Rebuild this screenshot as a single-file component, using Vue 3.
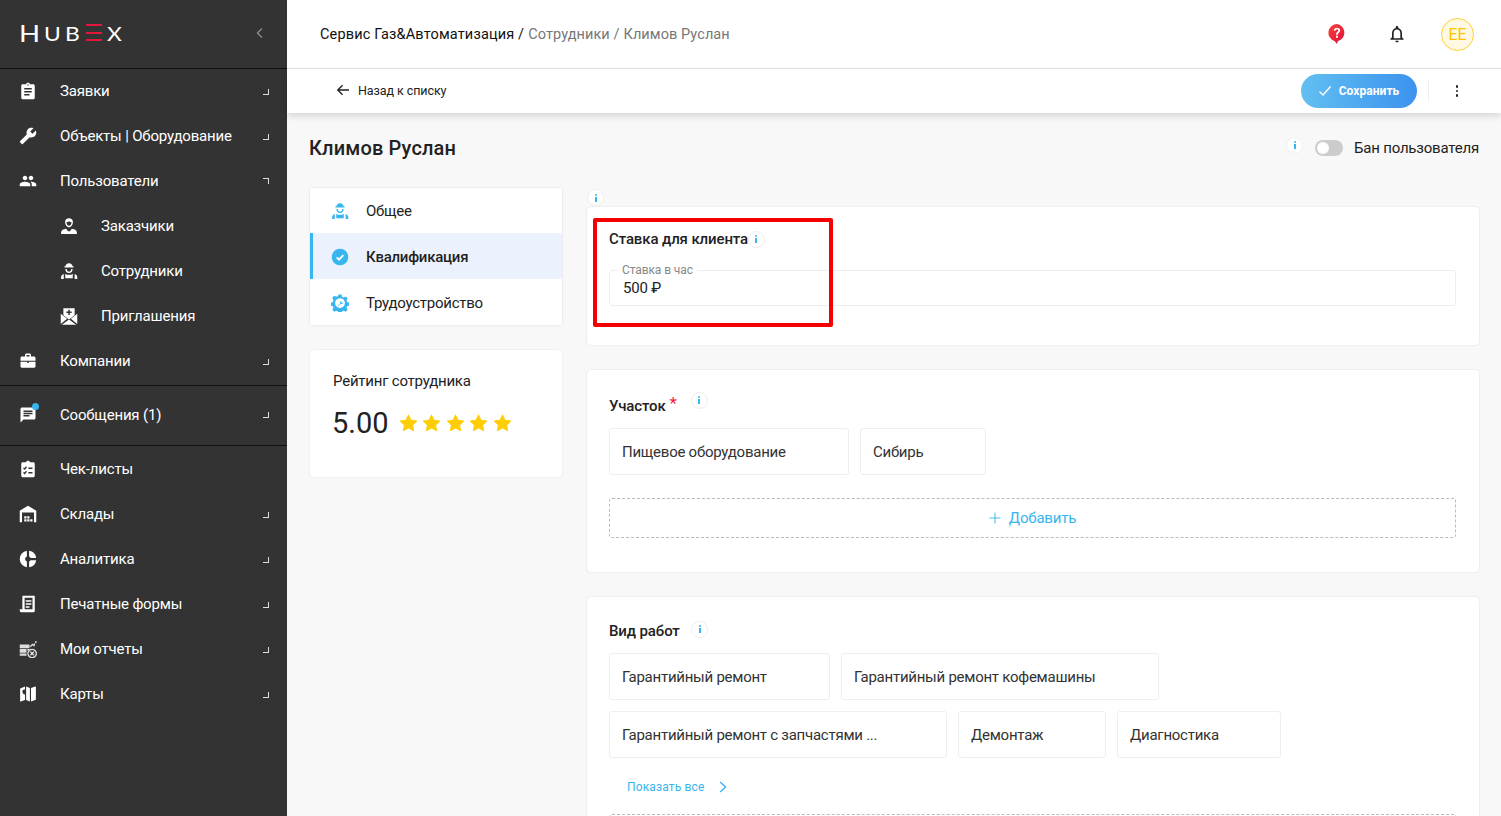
<script setup>
const WHITE = "#fff"
const DARK = "#333"
const BLUE = "#36b5ee"

const workerPaths = (c) => [
  { d: "M12 1.500c-2.700 0-4.600 1.700-4.800 4.300H6v1.500h12V5.800h-1.200c-.2-2.600-2.100-4.300-4.800-4.300z", fill: c },
  { d: "M8 9.300c.2 2.800 1.900 4.500 4 4.500s3.800-1.700 4-4.500", fill: "none", stroke: c },
  { d: "M1.500 22.500V20c0-2 1.500-3.300 3.500-4v6.500zM23 22.500V20c0-2-1.500-3.300-3.500-4v6.500zM7 15.500l2 1.500h6l2-1.500v6H7z", fill: c },
]

const icons = {
  assign: [{ d: "M19 3h-4.180C14.400 1.840 13.300 1 12 1s-2.400.84-2.820 2H5c-1.100 0-2 .9-2 2v16c0 1.100.9 2 2 2h14c1.100 0 2-.9 2-2V5c0-1.100-.9-2-2-2zm-7 0c.55 0 1 .45 1 1s-.45 1-1 1-1-.45-1-1 .45-1 1-1zm2 15H7v-2h7v2zm3-4H7v-2h10v2zm0-4H7V8h10v2z", fill: WHITE }],
  wrench: [{ d: "M1.300 19l9.100-9.100c-.9-2.300-.4-5 1.500-6.900 2-2 5-2.400 7.400-1.300L15 6l3 3 4.400-4.300c1.200 2.400.7 5.400-1.300 7.400-1.900 1.900-4.600 2.400-6.900 1.500l-9.100 9.100c-.4.4-1 .4-1.400 0l-2.300-2.300c-.5-.4-.5-1.100-.1-1.400z", fill: WHITE }],
  people: [{ d: "M16 11c1.660 0 2.990-1.340 2.990-3S17.660 5 16 5s-3 1.340-3 3 1.340 3 3 3zm-8 0c1.660 0 2.990-1.340 2.990-3S9.660 5 8 5 5 6.340 5 8s1.340 3 3 3zm0 2c-2.330 0-7 1.170-7 3.500V19h14v-2.500c0-2.330-4.670-3.500-7-3.500zm8 0c-.29 0-.62.02-.97.05 1.160.84 1.970 1.970 1.970 3.450V19h6v-2.500c0-2.330-4.670-3.500-7-3.500z", fill: WHITE }],
  client: [
    { d: "M12 1.500c-3 0-5.200 1.700-5.200 5 0 3.400 2.200 7 5.200 7s5.200-3.600 5.200-7c0-3.300-2.200-5-5.200-5zm0 10.300c-1.800 0-3.300-2.300-3.500-4.800 1.300-.1 2.700-.6 3.500-1.500.8.900 2.200 1.400 3.500 1.500-.2 2.500-1.700 4.800-3.500 4.800z", fill: WHITE },
    { d: "M1.500 22.500v-2.300c0-2.700 3.300-4.300 6.700-4.700l2.500 3.500h2.600l2.500-3.500c3.400.4 6.700 2 6.700 4.700v2.300z", fill: WHITE },
  ],
  worker: workerPaths(WHITE),
  invite: [
    { d: "M4.500 1.500h15v9.500L12 16.500 4.500 11z", fill: WHITE },
    { d: "M11 3.500h2V6h2.500v2H13v2.500h-2V8H8.500V6H11z", fill: DARK },
    { d: "M1 9v13.500L9.500 15.500zM23 9v13.500L14.500 15.500zM2.500 23.500 12 16.500l9.500 7z", fill: WHITE },
  ],
  work: [
    { d: "M20 6h-4V4c0-1.110-.89-2-2-2h-4c-1.110 0-2 .89-2 2v2H4c-1.110 0-2 .89-2 2v3.500h20V8c0-1.110-.89-2-2-2zm-6 0h-4V4h4v2zM2 13v6c0 1.110.89 2 2 2h16c1.110 0 2-.89 2-2v-6h-9v1.500h-2V13z", fill: WHITE },
  ],
  chat: [{ d: "M20 2H4c-1.100 0-1.990.9-1.990 2L2 22l4-4h14c1.100 0 2-.9 2-2V4c0-1.100-.9-2-2-2zM6 9h12v2H6V9zm8 5H6v-2h8v2zm4-6H6V6h12v2z", fill: WHITE }],
  check: [
    { d: "M19 3h-4.180C14.400 1.840 13.300 1 12 1s-2.400.84-2.820 2H5c-1.100 0-2 .9-2 2v16c0 1.100.9 2 2 2h14c1.100 0 2-.9 2-2V5c0-1.100-.9-2-2-2z", fill: WHITE },
    { d: "M6 10.500l1.500 1.500L10 9M6 16.500 7.500 18l2.500-3M12.500 11H18M12.500 17H18", fill: "none", stroke: DARK },
  ],
  store: [
    { d: "M1 23V7.500L12 1l11 6.500V23h-3V10H4v13z", fill: WHITE },
    { d: "M7 19h3v3H7zM11 19h3v3h-3zM15 19h3v3h-3zM7 15h3v3H7zM11 15h3v3h-3z", fill: WHITE },
  ],
  pie: [
    { d: "M10.500 1.100A11 11 0 0 0 10.500 22.900V15.400A3.600 3.600 0 0 1 10.500 8.600z", fill: WHITE },
    { d: "M13.500 1.100V8.600a3.600 3.600 0 0 1 1.900 1.900h7.500A11 11 0 0 0 13.500 1.100zM15.400 13.500a3.600 3.600 0 0 1-1.900 1.900v7.500a11 11 0 0 0 9.400-9.400z", fill: WHITE },
  ],
  print: [
    { d: "M5 1h16v20c0 1.400-1 2-2 2H3c-1.300 0-2-1-2-2v-2h3.500V1.500zm2.500 2.500V19H18V3.500zM9 7h7.500v2H9zm0 4h7.500v2H9zm0 4h5v2H9z", fill: WHITE, rule: "evenodd" },
  ],
  report: [
    { d: "M1 6h13v5H1zM1 12h9v5H1zM11 12h3v2h-3zM1 18h9v3H1z", fill: "#ddd" },
    { d: "M15 9l3-3 2 1.500 1-3", fill: "none", stroke: "#ddd" },
    { d: "M21.500 1.500h2v2h-2z", fill: WHITE },
    { d: "M17.500 12.500a5.500 5.500 0 1 0 .01 0zM15.200 15.600l4.700 4.700M19.900 15.600l-4.700 4.700", fill: "none", stroke: "#ddd" },
  ],
  map: [
    { d: "M1.500 4.500 8 2v4.200a2.500 2.500 0 0 0-3.500 2.300C4.500 10.500 7 13 7 13s1-1 1-1.500V20l-5.500 2c-.5.200-1-.1-1-.7z", fill: WHITE },
    { d: "M9.500 2l5 2v18l-5-2zM16 4l5.500-2c.5-.2 1 .1 1 .7v16.800L16 22z", fill: WHITE },
  ],
}

const tabIcons = {
  worker: workerPaths(BLUE),
  done: [
    { d: "M12 1a11 11 0 1 0 .01 0z", fill: BLUE },
    { d: "M7.500 12.500l3.200 3 5.800-6", fill: "none", stroke: WHITE, width: 2.400 },
  ],
  gear: [
    { d: "M10 .8h4l.6 3 2.300 1 2.600-1.600 2.800 2.800-1.600 2.600 1 2.300 3 .6v4l-3 .6-1 2.300 1.600 2.600-2.800 2.800-2.600-1.600-2.300 1-.6 3h-4l-.6-3-2.300-1-2.600 1.600-2.800-2.800 1.600-2.600-1-2.300-3-.6v-4l3-.6 1-2.300L1.700 5l2.800-2.800 2.600 1.600 2.300-1zM12 5.500a6.500 6.500 0 1 0 .01 0z", fill: BLUE, rule: "evenodd" },
    { d: "M8.500 16.200l3.800-3.800c-.5-1.500.1-3.300 2-3.900l-1 2 1.500 1.500 2-1c-.4 1.800-2.300 2.600-3.900 2l-3.700 3.800z", fill: BLUE },
  ],
}

const menu = [
  { label: "Заявки", icon: "assign", arrow: "down" },
  { label: "Объекты | Оборудование", icon: "wrench", arrow: "down" },
  { label: "Пользователи", icon: "people", arrow: "up" },
  { label: "Заказчики", icon: "client", sub: true },
  { label: "Сотрудники", icon: "worker", sub: true },
  { label: "Приглашения", icon: "invite", sub: true },
  { label: "Компании", icon: "work", arrow: "down", line: true },
  { label: "Сообщения (1)", icon: "chat", arrow: "down", tall: true, dot: true, line: true },
  { label: "Чек-листы", icon: "check" },
  { label: "Склады", icon: "store", arrow: "down" },
  { label: "Аналитика", icon: "pie", arrow: "down" },
  { label: "Печатные формы", icon: "print", arrow: "down" },
  { label: "Мои отчеты", icon: "report", arrow: "down" },
  { label: "Карты", icon: "map", arrow: "down" },
]

const tabs = [
  { label: "Общее", icon: "worker" },
  { label: "Квалификация", icon: "done", active: true },
  { label: "Трудоустройство", icon: "gear" },
]

const areas = [
  { label: "Пищевое оборудование", width: 240 },
  { label: "Сибирь", width: 126 },
]
const workRows = [
  [
    { label: "Гарантийный ремонт", width: 221 },
    { label: "Гарантийный ремонт кофемашины", width: 318 },
  ],
  [
    { label: "Гарантийный ремонт с запчастями ...", width: 338 },
    { label: "Демонтаж", width: 148 },
    { label: "Диагностика", width: 164 },
  ],
]
</script>

<template>
  <div class="page">
    <aside class="side">
      <div class="logo-row">
        <div class="logo">
          <span class="logo-h">H</span><span class="logo-s">U</span><span class="logo-s">B</span>
          <span class="logo-e"><i></i><i></i><i></i></span>
          <span class="logo-s logo-x">X</span>
        </div>
        <svg class="collapse" width="8" height="12" viewBox="0 0 8 12"><path d="M6 1.500 1.500 6 6 10.500" fill="none" stroke="#888" stroke-width="1.500" /></svg>
      </div>
      <nav class="nav">
        <div
          v-for="item in menu"
          :key="item.label"
          class="m-item"
          :class="{ 'm-sub': item.sub, 'm-tall': item.tall, 'm-line': item.line }"
        >
          <span class="m-icon">
            <svg width="18" height="18" viewBox="0 0 24 24">
              <path
                v-for="(p, i) in icons[item.icon]"
                :key="i"
                :d="p.d"
                :fill="p.fill"
                :fill-rule="p.rule"
                :stroke="p.stroke"
                :stroke-width="p.stroke ? 1.800 : 0"
              />
            </svg>
            <i v-if="item.dot" class="m-dot"></i>
          </span>
          <span class="m-label">{{ item.label }}</span>
          <i v-if="item.arrow" class="m-arrow" :class="item.arrow"></i>
        </div>
      </nav>
    </aside>

    <main class="main">
      <header class="top">
        <div class="crumbs">
          <span class="c-dark">Сервис Газ&amp;Автоматизация /</span>
          <span class="c-gray">Сотрудники /</span>
          <span class="c-gray">Климов Руслан</span>
        </div>
        <div class="top-icons">
          <svg width="20" height="22" viewBox="0 0 20 22">
            <defs>
              <linearGradient id="helpFill" x1="0" y1="0" x2="1" y2="1">
                <stop offset="0" stop-color="#f6413c" />
                <stop offset="1" stop-color="#e0103a" />
              </linearGradient>
            </defs>
            <path d="M10 1a8.700 8.700 0 0 0-2.500 17l2.500 3 1-3A8.700 8.700 0 0 0 10 1z" fill="url(#helpFill)" />
            <path d="M6.800 7.600C7 5.800 8.200 4.800 10 4.800c1.900 0 3.200 1.100 3.200 2.700 0 2.300-2.400 2.300-2.400 4.300H9c0-2.700 2.300-2.900 2.300-4.200 0-.7-.5-1.100-1.300-1.100s-1.300.5-1.400 1.200zM9 12.800h1.900v1.900H9z" fill="#fff" />
          </svg>
          <svg class="bell" width="20" height="22" viewBox="0 0 24 24"><path d="M12 22c1.100 0 2-.9 2-2h-4c0 1.100.9 2 2 2zm6-6v-5c0-3.070-1.630-5.640-4.500-6.320V4c0-.83-.67-1.500-1.500-1.500s-1.500.67-1.500 1.500v.68C7.640 5.360 6 7.920 6 11v5l-2 2v1h16v-1l-2-2zm-2 1H8v-6c0-2.480 1.510-4.500 4-4.500s4 2.020 4 4.500v6z" fill="#222" /></svg>
          <div class="avatar">EE</div>
        </div>
      </header>

      <div class="subbar">
        <div class="back">
          <svg width="14" height="14" viewBox="0 0 14 14"><path d="M13 7H2M6.500 2.300 1.800 7l4.700 4.700" fill="none" stroke="#222" stroke-width="1.400" /></svg>
          <span>Назад к списку</span>
        </div>
        <div class="actions">
          <button class="save">
            <svg width="14" height="12" viewBox="0 0 14 12"><path d="M1.500 6.500 5 10l7.500-8.500" fill="none" stroke="#fff" stroke-width="1.400" /></svg>
            Сохранить
          </button>
          <span class="v-sep"></span>
          <span class="dots"><i></i><i></i><i></i></span>
        </div>
      </div>

      <div class="content">
        <div class="head-row">
          <h1>Климов Руслан</h1>
          <div class="ban">
            <span class="info"><i></i></span>
            <span class="toggle"><i></i></span>
            <span class="ban-label">Бан пользователя</span>
          </div>
        </div>

        <div class="columns">
          <div class="left">
            <div class="tabs">
              <div v-for="t in tabs" :key="t.label" class="tab" :class="{ active: t.active }">
                <svg width="18" height="18" viewBox="0 0 24 24">
                  <path
                    v-for="(p, i) in tabIcons[t.icon]"
                    :key="i"
                    :d="p.d"
                    :fill="p.fill"
                    :fill-rule="p.rule"
                    :stroke="p.stroke"
                    :stroke-width="p.stroke ? (p.width || 1.800) : 0"
                  />
                </svg>
                <span>{{ t.label }}</span>
              </div>
            </div>
            <div class="rating">
              <div class="rating-title">Рейтинг сотрудника</div>
              <div class="rating-row">
                <span class="rating-num">5.00</span>
                <span class="stars">
                  <svg v-for="n in 5" :key="n" width="19" height="18" viewBox="0 0 24 24"><path d="M12 1.500l3.300 6.900 7.500 1-5.500 5.200 1.400 7.500L12 18.500l-6.700 3.600 1.400-7.500L1.200 9.400l7.500-1z" fill="#fdcd06" stroke="#fdcd06" stroke-width="1.500" stroke-linejoin="round" /></svg>
                </span>
              </div>
            </div>
          </div>

          <div class="right">
            <span class="info info-over"><i></i></span>
            <section class="card card-rate">
              <div class="card-title">Ставка для клиента <span class="info info-inline"><i></i></span></div>
              <div class="field">
                <span class="legend">Ставка в час</span>
                <span class="value">500 ₽</span>
              </div>
              <div class="annotation"></div>
            </section>

            <section class="card card-area">
              <div class="card-title">Участок<span class="req">*</span><span class="info info-area"><i></i></span></div>
              <div class="chips">
                <div v-for="c in areas" :key="c.label" class="chip" :style="{ width: c.width + 'px' }">{{ c.label }}</div>
              </div>
              <div class="add">
                <svg width="12" height="12" viewBox="0 0 12 12"><path d="M6 .5v11M.5 6h11" stroke="#4fbdf0" stroke-width="1.100" /></svg>
                Добавить
              </div>
            </section>

            <section class="card card-work">
              <div class="card-title">Вид работ <span class="info info-work"><i></i></span></div>
              <div v-for="(row, r) in workRows" :key="r" class="chips">
                <div v-for="c in row" :key="c.label" class="chip" :style="{ width: c.width + 'px' }">{{ c.label }}</div>
              </div>
              <div class="more">
                <span>Показать все</span>
                <svg width="8" height="12" viewBox="0 0 8 12"><path d="M1.200 1 6.500 6l-5.300 5" fill="none" stroke="#36b5ee" stroke-width="1.400" /></svg>
              </div>
              <div class="add add-cut"></div>
            </section>
          </div>
        </div>
      </div>
    </main>
  </div>
</template>

<style>
html,
body {
  margin: 0;
  overflow: hidden;
}
</style>

<style scoped>
.page {
  display: flex;
  height: 816px;
  overflow: hidden;
  font-family: Roboto, "Liberation Sans", sans-serif;
  color: #222;
  background: #f8f8f8;
}

/* sidebar */
.side {
  width: 287px;
  flex: none;
  background: #333;
  color: #fff;
}
.logo-row {
  height: 68px;
  display: flex;
  align-items: center;
  justify-content: space-between;
  padding: 0 23px 0 19px;
  border-bottom: 1px solid #111;
  box-sizing: content-box;
}
.logo {
  display: flex;
  align-items: flex-end;
  height: 17px;
  margin-top: -3px;
  font-family: Lato, sans-serif;
  font-weight: 400;
  line-height: 1;
  color: #fff;
}
.logo-h {
  font-size: 24px;
  width: 25px;
  height: 17px;
  line-height: 17px;
  transform: scaleX(1.150);
  transform-origin: left;
}
.logo-s {
  font-size: 19px;
  width: 21px;
  height: 14px;
  line-height: 14px;
  transform: scaleX(1.200);
  transform-origin: left;
}
.logo-x {
  width: 16px;
}
.logo-e {
  display: flex;
  flex-direction: column;
  justify-content: space-between;
  width: 16px;
  height: 17px;
  margin-right: 5px;
}
.logo-e i {
  display: block;
  height: 2px;
  background: #e3173e;
}
.collapse {
  margin-top: -2px;
}
.nav {
  margin-top: -1px;
}
.m-item {
  height: 45px;
  display: flex;
  align-items: center;
  padding-left: 19px;
  position: relative;
  font-size: 15px;
  letter-spacing: -0.18px;
  box-sizing: border-box;
}
.m-sub {
  padding-left: 60px;
}
.m-line {
  height: 48px;
  padding-bottom: 2px;
  border-bottom: 1px solid #111;
}
.m-tall {
  height: 60px;
  padding-bottom: 1px;
}
.m-icon {
  width: 18px;
  height: 18px;
  position: relative;
  flex: none;
}
.m-icon svg {
  display: block;
}
.m-label {
  margin-left: 23px;
  white-space: nowrap;
}
.m-dot {
  position: absolute;
  top: -3px;
  right: -2px;
  width: 7px;
  height: 7px;
  border-radius: 50%;
  background: #36b5ee;
}
.m-arrow {
  position: absolute;
  right: 18px;
  top: 50%;
  width: 5px;
  height: 5px;
  margin-top: -2px;
  border-right: 1.500px solid #ddd;
}
.m-arrow.down {
  border-bottom: 1.500px solid #ddd;
}
.m-arrow.up {
  border-top: 1.500px solid #ddd;
  margin-top: -3px;
}
.m-line .m-arrow {
  margin-top: -3px;
}
.m-tall .m-arrow {
  margin-top: -4px;
}

/* top bars */
.main {
  flex: 1;
  min-width: 0;
  display: flex;
  flex-direction: column;
}
.top {
  height: 68px;
  flex: none;
  background: #fff;
  border-bottom: 1px solid #e5e5e5;
  display: flex;
  align-items: center;
  justify-content: space-between;
  padding: 0 27px 0 33px;
}
.crumbs {
  display: flex;
  gap: 4px;
  font-size: 14.500px;
}
.c-dark {
  color: #111;
  letter-spacing: 0.155px;
}
.c-gray {
  color: #777;
  letter-spacing: 0.08px;
}
.top-icons {
  display: flex;
  align-items: center;
}
.bell {
  margin-left: 40px;
}
.avatar {
  width: 31px;
  height: 31px;
  margin-left: 34px;
  border: 1px solid #fdd03b;
  border-radius: 50%;
  background: #fff8e3;
  color: #fdc500;
  font-size: 16px;
  display: flex;
  align-items: center;
  justify-content: center;
}
.subbar {
  height: 44px;
  flex: none;
  background: #fff;
  box-shadow: 0 3px 7px rgba(0, 0, 0, 0.14);
  display: flex;
  align-items: center;
  justify-content: space-between;
  padding: 0 43px 0 49px;
  position: relative;
}
.back {
  display: flex;
  align-items: center;
  gap: 8px;
  padding-bottom: 2px;
  font-size: 12.500px;
  letter-spacing: -0.08px;
}
.actions {
  display: flex;
  align-items: center;
}
.save {
  width: 116px;
  height: 34px;
  border: 0;
  border-radius: 17px;
  background: linear-gradient(90deg, #62bff1, #3c92ee);
  color: #fff;
  font: 700 12px Roboto, sans-serif;
  letter-spacing: 0.05px;
  display: flex;
  align-items: center;
  justify-content: center;
  gap: 7px;
  padding: 0;
}
.v-sep {
  width: 1px;
  height: 20px;
  margin-left: 11px;
  background: #eee;
}
.dots {
  display: flex;
  flex-direction: column;
  gap: 2px;
  margin-left: 27px;
}
.dots i {
  width: 2.500px;
  height: 2.500px;
  border-radius: 50%;
  background: #222;
}

/* content */
.content {
  flex: 1;
  min-height: 0;
  padding: 0 22px;
}
.head-row {
  height: 75px;
  display: flex;
  align-items: flex-start;
  justify-content: space-between;
}
h1 {
  margin: 23px 0 0;
  font-size: 20px;
  line-height: 24px;
  font-weight: 500;
  letter-spacing: 0.15px;
}
.ban {
  display: flex;
  align-items: center;
  margin-top: 26px;
}
.ban-label {
  font-size: 15px;
  letter-spacing: -0.2px;
  margin-left: 11px;
}
.toggle {
  width: 28px;
  height: 16px;
  margin-left: 12px;
  border-radius: 8px;
  background: #ccc;
  position: relative;
}
.toggle i {
  position: absolute;
  left: 2px;
  top: 2px;
  width: 12px;
  height: 12px;
  border-radius: 50%;
  background: #fff;
}
.info {
  width: 17px;
  height: 17px;
  box-sizing: border-box;
  border: 1px solid #eee;
  border-radius: 50%;
  background: #fff;
  position: relative;
  display: inline-block;
  flex: none;
  margin-top: -6px;
}
.info i {
  position: absolute;
  left: 6.500px;
  top: 6.500px;
  width: 2px;
  height: 5px;
  background: #36b5ee;
}
.info i::before {
  content: "";
  position: absolute;
  left: 0;
  top: -3px;
  width: 2px;
  height: 2px;
  border-radius: 50%;
  background: #36b5ee;
}
.columns {
  display: flex;
  gap: 25px;
  align-items: flex-start;
}
.left {
  width: 252px;
  flex: none;
  padding-left: 1px;
}
.tabs {
  background: #fff;
  box-shadow: 0 0 2px rgba(0, 0, 0, 0.12);
}
.tab {
  height: 46px;
  display: flex;
  align-items: center;
  gap: 17px;
  padding-left: 21px;
  padding-top: 1px;
  font-size: 15px;
  letter-spacing: -0.25px;
  box-sizing: border-box;
}
.tab:first-child {
  height: 45px;
  padding-top: 0;
}
.tab.active {
  background: #ecf2fd;
  border-left: 3px solid #36b5ee;
  padding-left: 18px;
  font-weight: 500;
}
.rating {
  height: 127px;
  margin-top: 25px;
  box-sizing: border-box;
  background: #fff;
  border-radius: 4px;
  box-shadow: 0 0 2px rgba(0, 0, 0, 0.12);
  padding: 22px 23px 0;
}
.rating-title {
  font-size: 15px;
  line-height: 18px;
  letter-spacing: -0.22px;
}
.rating-row {
  display: flex;
  align-items: center;
  margin: 15px 0 0 -1px;
}
.rating-num {
  font-size: 29px;
  line-height: 36px;
}
.stars {
  display: flex;
  gap: 4.500px;
  margin-left: 10px;
}
.right {
  flex: 1;
  min-width: 0;
  position: relative;
  margin-top: 19px;
}
.info-over {
  position: absolute;
  left: 0;
  top: -18px;
  margin: 0;
}
.card {
  background: #fff;
  border-radius: 4px;
  box-shadow: 0 0 2px rgba(0, 0, 0, 0.14);
  padding: 0 23px 0 22px;
  margin-bottom: 25px;
  position: relative;
}
.card-rate {
  height: 138px;
  padding-top: 23px;
  box-sizing: border-box;
}
.card-area {
  height: 202px;
  padding-top: 25px;
  box-sizing: border-box;
}
.card-work {
  height: 300px;
  padding-top: 23px;
  box-sizing: border-box;
}
.card-title {
  font-size: 15px;
  font-weight: 500;
  line-height: 18px;
  letter-spacing: -0.12px;
  display: flex;
  align-items: center;
  white-space: pre;
}
.card-area .card-title,
.card-work .card-title {
  height: 22px;
}
.info-inline {
  margin: 0 0 0 -4px;
}
.info-area {
  margin: -12px 0 0 14px;
}
.info-work {
  margin: -4px 0 0 8px;
}
.req {
  color: #f0263c;
  margin: -6px 0 0 4px;
  font-size: 17px;
  font-weight: 400;
}
.field {
  margin-top: 22px;
  height: 36px;
  box-sizing: border-box;
  border: 1px solid #eee;
  border-radius: 3px;
  position: relative;
  padding: 9px 13px 0;
  font-size: 15px;
  line-height: 17px;
  letter-spacing: -0.2px;
}
.legend {
  position: absolute;
  left: 8px;
  top: -8px;
  padding: 0 4px;
  background: #fff;
  font-size: 12px;
  line-height: 14px;
  letter-spacing: -0.1px;
  color: #888;
}
.annotation {
  position: absolute;
  left: 6px;
  top: 11px;
  width: 240px;
  height: 109px;
  box-sizing: border-box;
  border: 4px solid #f40000;
  border-radius: 2px;
}
.chips {
  display: flex;
  gap: 11px;
  margin-top: 11px;
}
.chip {
  height: 47px;
  box-sizing: border-box;
  border: 1px solid #eee;
  border-radius: 3px;
  display: flex;
  align-items: center;
  padding-left: 12px;
  font-size: 15px;
  letter-spacing: -0.25px;
  color: #333;
  white-space: nowrap;
}
.add {
  height: 40px;
  margin-top: 23px;
  box-sizing: border-box;
  border: 1px dashed #bbb;
  border-radius: 3px;
  display: flex;
  align-items: center;
  justify-content: center;
  gap: 8px;
  color: #36b5ee;
  font-size: 15px;
  letter-spacing: -0.2px;
}
.add-cut {
  margin-top: 21px;
}
.more {
  height: 12px;
  margin: 23px 0 0 18px;
  display: flex;
  align-items: center;
  gap: 14px;
  font-size: 12px;
  letter-spacing: 0.15px;
  color: #36b5ee;
}
</style>
